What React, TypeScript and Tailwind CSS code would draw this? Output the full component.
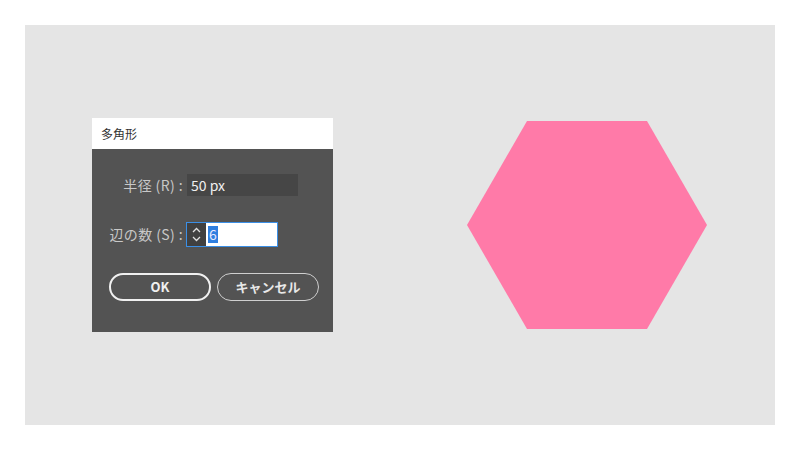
import React from "react";

const font = { fontFamily: '"Noto Sans CJK JP", "Noto Sans", sans-serif' };

export default function App() {
  return (
    <div className="w-[800px] h-[450px] bg-white p-[25px]" style={font}>
      <div className="w-[750px] h-[400px] bg-[#e5e5e5] flex">
        <div className="pl-[67px] pt-[93px]">
          <div className="w-[241px] h-[214px] flex flex-col">
            <div className="h-[31px] bg-white flex items-center pl-[9px] text-[12px] text-[#333]">多角形</div>
            <div className="flex-1 bg-[#535353] flex flex-col">
              <div className="flex items-center mt-[25px] h-[22px]">
                <div className="w-[95px] text-right pr-[4px] text-[14px] tracking-[0.4px] text-[#c8c8c8]">半径 (R) :</div>
                <div className="w-[111px] h-[22px] bg-[#464646] flex items-center pl-[4px] text-[14px] text-[#f0f0f0]">50 px</div>
              </div>
              <div className="flex items-center mt-[26px] h-[25px]">
                <div className="w-[94px] text-right pr-[3px] text-[14px] tracking-[0.4px] text-[#c8c8c8]">辺の数 (S) :</div>
                <div className="w-[92px] h-[25px] border border-[#3b8fe6] flex">
                  <div className="w-[19px] bg-[#404040] flex flex-col items-center justify-center gap-[3px]">
                    <svg width="9" height="6" viewBox="0 0 9 6"><path d="M1 5 L4.5 1.5 L8 5" stroke="#e0e0e0" strokeWidth="1.3" fill="none" /></svg>
                    <svg width="9" height="6" viewBox="0 0 9 6"><path d="M1 1 L4.5 4.5 L8 1" stroke="#e0e0e0" strokeWidth="1.3" fill="none" /></svg>
                  </div>
                  <div className="flex-1 bg-white flex items-center pl-[2px]">
                    <span className="bg-[#2f7fe0] text-[#e8e8ff] text-[14px] leading-[17px] px-[1px]">6</span>
                  </div>
                </div>
              </div>
              <div className="flex mt-[26px] ml-[17px] gap-[6px]">
                <div className="w-[102px] h-[28px] rounded-full border-2 border-[#f0f0f0] flex items-center justify-center text-[13px] font-bold text-[#f0f0f0]">OK</div>
                <div className="w-[102px] h-[28px] rounded-full border border-[#cfcfcf] flex items-center justify-center text-[13px] font-semibold text-[#e8e8e8]">キャンセル</div>
              </div>
            </div>
          </div>
        </div>
        <div className="pl-[134px] pt-[96px]">
          <svg width="240" height="208" viewBox="0 0 240 208">
            <polygon points="60,0 180,0 240,104 180,208 60,208 0,104" fill="#ff7aa8" />
          </svg>
        </div>
      </div>
    </div>
  );
}
